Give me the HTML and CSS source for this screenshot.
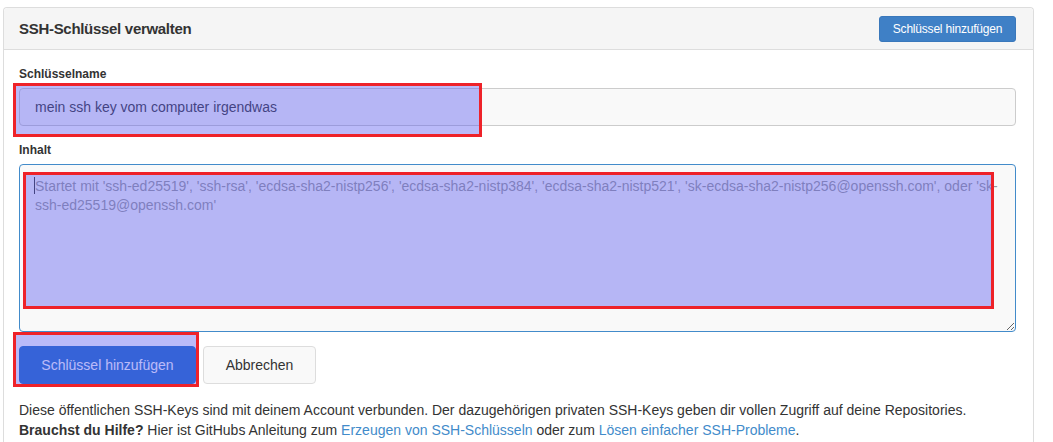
FILE: index.html
```html
<!DOCTYPE html>
<html lang="de">
<head>
    <meta charset="UTF-8">
    <title>SSH-Schlüssel verwalten</title>
    <link rel="stylesheet" href="styles.css">
</head>
<body>
    <div class="panel">
        <div class="panel-heading">
            <h3 class="panel-title">SSH-Schlüssel verwalten</h3>
            <button class="btn btn-small">Schlüssel hinzufügen</button>
        </div>
        <div class="panel-body">
            <div class="field">
                <label class="field-label">Schlüsselname</label>
                <div class="field-wrap">
                    <input class="field-input" type="text" value="mein ssh key vom computer irgendwas">
                    <div class="mark mark-name"></div>
                </div>
            </div>
            <div class="field">
                <label class="field-label">Inhalt</label>
                <div class="field-wrap">
                    <textarea class="field-textarea" placeholder="Startet mit 'ssh-ed25519', 'ssh-rsa', 'ecdsa-sha2-nistp256', 'ecdsa-sha2-nistp384', 'ecdsa-sha2-nistp521', 'sk-ecdsa-sha2-nistp256@openssh.com', oder 'sk-ssh-ed25519@openssh.com'"></textarea>
                    <span class="caret"></span>
                    <div class="mark mark-content"></div>
                </div>
            </div>
            <div class="actions">
                <button class="btn btn-primary">Schlüssel hinzufügen</button>
                <button class="btn btn-default">Abbrechen</button>
                <div class="mark mark-submit"></div>
            </div>
            <p class="help">Diese öffentlichen SSH-Keys sind mit deinem Account verbunden. Der dazugehörigen privaten SSH-Keys geben dir vollen Zugriff auf deine Repositories.<br>
            <strong>Brauchst du Hilfe?</strong> Hier ist GitHubs Anleitung zum <a href="#">Erzeugen von SSH-Schlüsseln</a> oder zum <a href="#">Lösen einfacher SSH-Probleme</a>.</p>
        </div>
    </div>
</body>
</html>
```

FILE: styles.css
```css
body {
    margin: 0;
    background-color: #ffffff;
    color: #333333;
    font-family: 'Liberation Sans', Arial, sans-serif;
    font-size: 14px;
}
.panel {
    margin: 7px 19px 0 3px;
    border: 1px solid #dddddd;
    border-bottom: none;
    border-radius: 4px 4px 0 0;
    height: 435px;
}
.panel-heading {
    display: flex;
    justify-content: space-between;
    align-items: center;
    height: 41px;
    padding: 0 17px 0 15px;
    background-color: #f5f5f5;
    border-bottom: 1px solid #dddddd;
    border-radius: 4px 4px 0 0;
}
.panel-title {
    margin: 0;
    font-size: 15px;
    font-weight: bold;
    letter-spacing: -0.3px;
    color: #333333;
}
.panel-body {
    padding: 15px 17px 0 15px;
}
.field {
    margin-bottom: 15px;
}
.field-label {
    display: block;
    font-size: 12px;
    font-weight: bold;
    line-height: 18px;
    margin-bottom: 5px;
}
.field-wrap {
    position: relative;
}
.field-input {
    display: block;
    box-sizing: border-box;
    width: 100%;
    height: 38px;
    padding: 0 15px;
    border: 1px solid #cccccc;
    border-radius: 4px;
    background-color: #f9f9f9;
    font-family: inherit;
    font-size: 14px;
    color: #333333;
}
.field-textarea {
    display: block;
    box-sizing: border-box;
    width: 100%;
    height: 168px;
    padding: 12px 15px;
    border: 1px solid #428bca;
    border-radius: 4px;
    background-color: #f9f9f9;
    font-family: inherit;
    font-size: 14px;
    line-height: 19px;
    color: #333333;
    outline: none;
}
.field-textarea::placeholder {
    color: #999999;
}
.caret {
    position: absolute;
    left: 15px;
    top: 13px;
    width: 1px;
    height: 17px;
    background-color: #333333;
}
.actions {
    position: relative;
    display: flex;
    gap: 7px;
    margin-top: -1px;
}
.btn {
    font-family: inherit;
    border-radius: 4px;
    cursor: pointer;
}
.btn-small {
    height: 26px;
    width: 137px;
    padding: 0;
    font-size: 12px;
    letter-spacing: -0.2px;
    color: #ffffff;
    background-color: #3f80c6;
    border: 1px solid #3a78bb;
    border-radius: 3px;
}
.btn-primary {
    height: 38px;
    width: 177px;
    font-size: 14px;
    color: #ffffff;
    background-color: #1d69c6;
    border: 1px solid #1d69c6;
}
.btn-default {
    height: 38px;
    width: 113px;
    font-size: 14px;
    color: #333333;
    background-color: #f9f9f9;
    border: 1px solid #dddddd;
}
.help {
    margin: 16px 0 0;
    line-height: 20px;
}
.help a {
    color: #428bca;
    text-decoration: none;
}
.mark {
    position: absolute;
    border: 3px solid #ee2229;
    background-color: rgba(90, 90, 240, 0.42);
    pointer-events: none;
}
.mark-name {
    left: -6px;
    top: -5px;
    width: 463px;
    height: 48px;
}
.mark-content {
    left: 4px;
    top: 8px;
    width: 965px;
    height: 131px;
}
.mark-submit {
    left: -6px;
    top: -14px;
    width: 180px;
    height: 49px;
}
```
